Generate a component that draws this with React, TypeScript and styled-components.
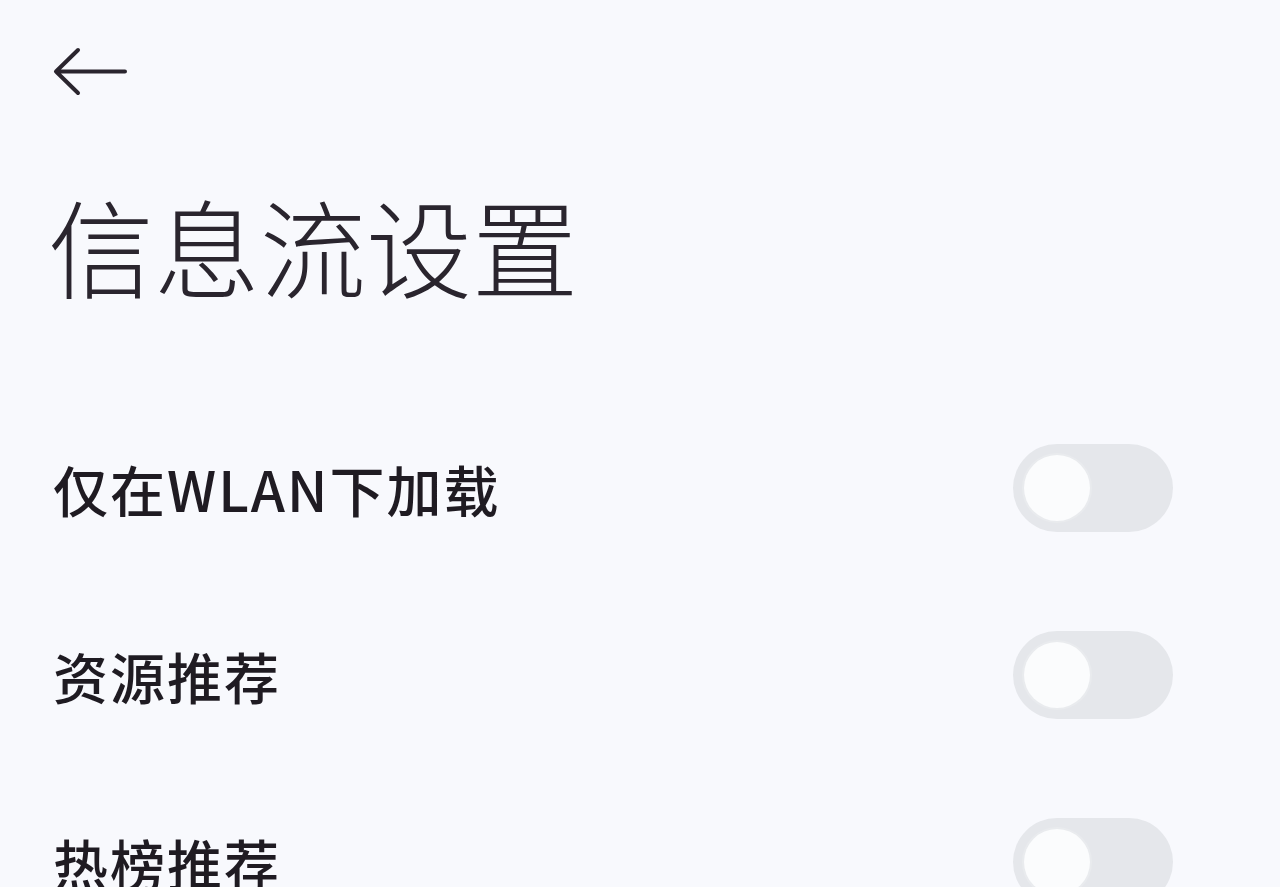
import styled, { createGlobalStyle } from 'styled-components';

const GlobalStyle = createGlobalStyle`
  html, body {
    margin: 0;
    padding: 0;
    background: #f8f9fd;
    overflow: hidden;
  }
  body {
    font-family: "Noto Sans CJK SC", "Noto Sans", sans-serif;
    color: #28232c;
  }
`;

const Page = styled.div`
  width: 1280px;
  min-height: 887px;
  background: #f8f9fd;
  display: flex;
  flex-direction: column;
`;

const TopBar = styled.div`
  height: 144px;
  flex-shrink: 0;
  display: flex;
  align-items: center;
  padding-left: 52px;
`;

const BackButton = styled.button`
  border: none;
  background: none;
  padding: 0;
  width: 76px;
  height: 50px;
  display: flex;
  align-items: center;
  cursor: pointer;
`;

const Title = styled.h1`
  margin: 0;
  padding-left: 48px;
  font-size: 106px;
  font-weight: 300;
  line-height: 1;
  height: 200px;
  flex-shrink: 0;
  display: flex;
  align-items: center;
  color: #2a252e;
`;

const List = styled.div`
  display: flex;
  flex-direction: column;
  margin-top: 50px;
`;

const Row = styled.div`
  height: 187px;
  flex-shrink: 0;
  display: flex;
  align-items: center;
  justify-content: space-between;
  padding: 0 107px 0 53px;
`;

const Label = styled.span`
  font-size: 55px;
  font-weight: 500;
  letter-spacing: 2px;
  color: #1f1b22;
`;

const Track = styled.div<{ $on?: boolean }>`
  width: 160px;
  height: 88px;
  border-radius: 44px;
  background: ${(p) => (p.$on ? '#3b7cf6' : '#e5e7eb')};
  display: flex;
  align-items: center;
  padding: 0 11px;
  box-sizing: border-box;
  justify-content: ${(p) => (p.$on ? 'flex-end' : 'flex-start')};
`;

const Knob = styled.div`
  width: 66px;
  height: 66px;
  border-radius: 50%;
  background: #fbfcfd;
  box-shadow: 0 0 0 2px #e9ebee;
`;

const rows = ['仅在WLAN下加载', '资源推荐', '热榜推荐'];

const App = () => {
  return (
    <>
      <GlobalStyle />
      <Page>
        <TopBar>
          <BackButton aria-label="返回">
            <svg width="76" height="50" viewBox="0 0 76 50" fill="none">
              <path
                d="M4 24.5 H73 M26 3 L4 24.5 L26 46"
                stroke="#2a252e"
                strokeWidth="4"
                strokeLinecap="round"
                strokeLinejoin="round"
              />
            </svg>
          </BackButton>
        </TopBar>
        <Title>信息流设置</Title>
        <List>
          {rows.map((r) => (
            <Row key={r}>
              <Label>{r}</Label>
              <Track>
                <Knob />
              </Track>
            </Row>
          ))}
        </List>
      </Page>
    </>
  );
};

export default App;
